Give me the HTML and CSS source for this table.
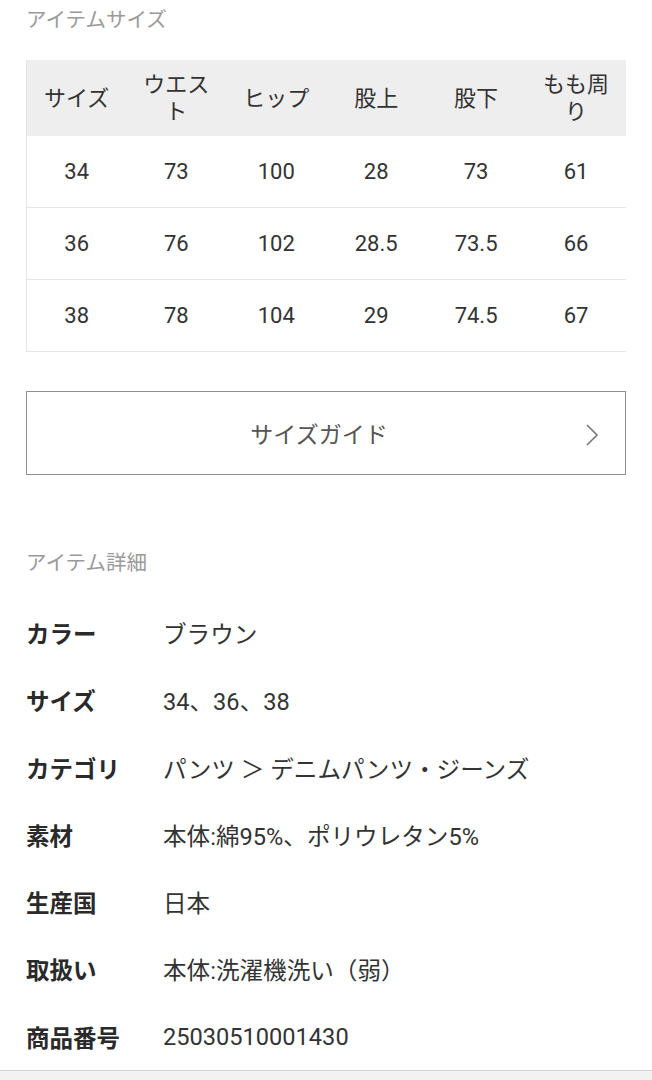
FILE: index.html
```html
<!DOCTYPE html>
<html lang="ja">
<head>
<meta charset="utf-8">
<title>アイテムサイズ</title>
<link rel="stylesheet" href="styles.css">
</head>
<body>
<main class="page">
  <h2 class="section-title">アイテムサイズ</h2>
  <div class="size-table-wrap">
    <table class="size-table">
      <thead>
        <tr><th>サイズ</th><th>ウエスト</th><th>ヒップ</th><th>股上</th><th>股下</th><th>もも周り</th></tr>
      </thead>
      <tbody>
        <tr><td>34</td><td>73</td><td>100</td><td>28</td><td>73</td><td>61</td></tr>
        <tr><td>36</td><td>76</td><td>102</td><td>28.5</td><td>73.5</td><td>66</td></tr>
        <tr><td>38</td><td>78</td><td>104</td><td>29</td><td>74.5</td><td>67</td></tr>
      </tbody>
    </table>
  </div>

  <a class="guide-button" href="#">
    <span class="guide-label">サイズガイド</span>
    <svg class="chevron" width="14" height="24" viewBox="0 0 14 24"><polyline points="2,2 12,12 2,22" fill="none" stroke="#777" stroke-width="1.6"/></svg>
  </a>

  <h2 class="section-title detail-title">アイテム詳細</h2>
  <dl class="details">
    <div class="detail-row"><dt>カラー</dt><dd>ブラウン</dd></div>
    <div class="detail-row"><dt>サイズ</dt><dd>34、36、38</dd></div>
    <div class="detail-row"><dt>カテゴリ</dt><dd>パンツ ＞ デニムパンツ・ジーンズ</dd></div>
    <div class="detail-row"><dt>素材</dt><dd>本体:綿95%、ポリウレタン5%</dd></div>
    <div class="detail-row"><dt>生産国</dt><dd>日本</dd></div>
    <div class="detail-row"><dt>取扱い</dt><dd>本体:洗濯機洗い（弱）</dd></div>
    <div class="detail-row"><dt>商品番号</dt><dd>25030510001430</dd></div>
  </dl>
</main>
<div class="bottom-bar"></div>
</body>
</html>
```

FILE: styles.css
```css
html, body {
  margin: 0;
  padding: 0;
  background: #fff;
}
body {
  font-family: Roboto, "Noto Sans CJK JP", sans-serif;
  color: #333;
}
.page {
  padding: 0 26px;
}
.section-title {
  margin: 0;
  font-size: 20.5px;
  line-height: 40px;
  font-weight: 400;
  color: #9a9a9a;
}
.size-table-wrap {
  margin-top: 20px;
  width: 600px;
  overflow: hidden;
}
.size-table {
  width: 600px;
  table-layout: fixed;
  border-collapse: collapse;
  border-left: 1px solid #e4e4e4;
  font-size: 22px;
}
.size-table th {
  background: #eeeeee;
  font-weight: 400;
  color: #333;
  height: 76px;
  padding: 0 10px;
  line-height: 27px;
  text-align: center;
  vertical-align: middle;
}
.size-table td {
  height: 71px;
  border-bottom: 1px solid #e6e6e6;
  text-align: center;
  vertical-align: middle;
  color: #333;
  padding: 0;
}
.guide-button {
  margin-top: 39px;
  height: 84px;
  box-sizing: border-box;
  border: 1px solid #8e8e8e;
  display: flex;
  align-items: center;
  justify-content: center;
  position: relative;
  text-decoration: none;
  color: #555;
  font-size: 23px;
  padding-right: 14px;
}
.chevron {
  position: absolute;
  right: 26px;
  top: 31px;
}
.detail-title {
  margin-top: 68px;
}
.details {
  margin: 16.5px 0 0;
}
.detail-row {
  display: flex;
  align-items: center;
  height: 67.25px;
}
.detail-row dt {
  width: 137px;
  flex: none;
  font-weight: 700;
  font-size: 23.5px;
  color: #2a2a2a;
}
.detail-row dd {
  margin: 0;
  font-size: 23.6px;
  color: #333;
}
.bottom-bar {
  height: 12px;
  border-top: 1px solid #d0d0d0;
  background: #f2f2f2;
}
```
